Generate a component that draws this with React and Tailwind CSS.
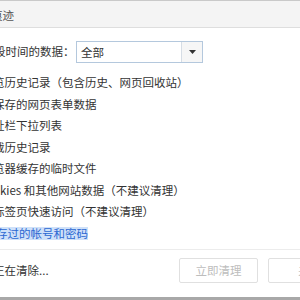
import React from "react";

const items = [
  { label: "览历史记录（包含历史、网页回收站）" },
  { label: "保存的网页表单数据" },
  { label: "址栏下拉列表" },
  { label: "载历史记录" },
  { label: "览器缓存的临时文件" },
  { label: "okies 和其他网站数据（不建议清理）" },
  { label: "标签页快速访问（不建议清理）" },
  { label: "存过的帐号和密码", link: true },
];

export default function App() {
  return (
    <div
      className="w-[300px] h-[300px] overflow-hidden bg-white flex flex-col text-[#333] text-[11.5px]"
      style={{ fontFamily: '"Noto Sans CJK SC", "Noto Sans", sans-serif' }}
    >
      {/* title bar */}
      <div className="h-[28px] shrink-0 bg-[#f4f4f4] border-t border-b border-t-[#c9c9c9] border-b-[#dedede] flex items-center">
        <span className="-ml-[9px] pt-[3px] text-[#555] whitespace-nowrap">痕迹</span>
      </div>

      {/* time range */}
      <div className="mt-[13px] flex items-center h-[22px] shrink-0">
        <span className="-ml-[6px] w-[82px] shrink-0 whitespace-nowrap">段时间的数据：</span>
        <div className="w-[127px] h-[22px] flex border border-[#b4c8dd] bg-white">
          <span className="flex-1 pl-[4px] leading-[20px]">全部</span>
          <div className="w-[21px] border-l border-[#d6dde5] bg-[#f6f6f6] flex items-center justify-center">
            <svg width="7" height="4" viewBox="0 0 7 4">
              <path d="M0 0h7L3.5 4z" fill="#333" />
            </svg>
          </div>
        </div>
      </div>

      {/* options */}
      <div className="mt-[9px] flex flex-col shrink-0">
        {items.map((item) => (
          <div key={item.label} className="h-[21.5px] leading-[21.5px] whitespace-nowrap">
            {item.link ? (
              <span className="-ml-[4px] inline-block leading-[13px] bg-[#cfe1f9] text-[#2b68d2]">
                {item.label}
              </span>
            ) : (
              <span className="-ml-[7px] inline-block">{item.label}</span>
            )}
          </div>
        ))}
      </div>

      {/* footer */}
      <div className="mt-[5px] border-t border-[#ececec] pt-[8px] flex items-center shrink-0">
        <span className="-ml-[7px] whitespace-nowrap">正在清除...</span>
        <div className="flex-1" />
        <div className="flex gap-[10px] -mr-[47px]">
          <button className="w-[79px] h-[25px] border border-[#e0e0e0] rounded-[2px] bg-white text-[#bdbdbd]">
            立即清理
          </button>
          <button className="w-[79px] h-[25px] border border-[#e0e0e0] rounded-[2px] bg-white text-[#bdbdbd] text-left pl-[29px]">
            关闭
          </button>
        </div>
      </div>

      <div className="flex-1" />
      <div className="h-[3px] shrink-0 bg-[#a8a8a8]" />
    </div>
  );
}
